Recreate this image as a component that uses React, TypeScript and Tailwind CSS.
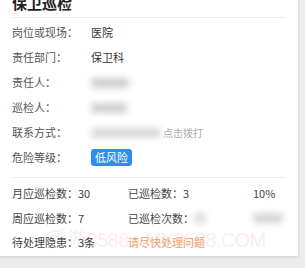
import React from "react";

const font = { fontFamily: '"Noto Sans CJK SC", "Liberation Sans", sans-serif' };

function Blob({ w, h = 10, c = "bg-[#cfcfcf]" }: { w: string; h?: number; c?: string }) {
  return <div className={`${w} ${c} rounded-sm blur-[3px]`} style={{ height: h }} />;
}

function Row({ label, children }: { label: string; children: React.ReactNode }) {
  return (
    <div className="flex h-[25px] items-center">
      <div className="w-[79px] text-[11px] text-[#555]">{label}</div>
      <div className="flex items-center text-[11px] text-[#333]">{children}</div>
    </div>
  );
}

export default function App() {
  return (
    <div className="h-[268px] w-[305px] overflow-hidden bg-[#ececec]" style={font}>
      <div className="relative h-[261px] w-[298px] bg-white shadow-[0_1px_3px_rgba(0,0,0,0.12)]">
        <div
          className="pointer-events-none absolute left-[48px] top-[234px] text-[20px] leading-[22px] tracking-[-0.6px] text-[#fdebf6]"
          style={{ fontFamily: '"Liberation Sans", "Noto Sans CJK SC", sans-serif' }}
        >
          手游3588 · MX3588.COM
        </div>
        <div className="relative px-3">
          <div className="mt-[-5px] text-[15px] font-bold leading-[15px] text-[#222]">保卫巡检</div>
          <div className="mt-[7px] h-px bg-[#eeeeee]" />
          <div className="pt-[2px]">
            <Row label="岗位或现场：">医院</Row>
            <Row label="责任部门：">保卫科</Row>
            <Row label="责任人：">
              <Blob w="w-[38px]" />
            </Row>
            <Row label="巡检人：">
              <Blob w="w-[36px]" />
            </Row>
            <Row label="联系方式：">
              <Blob w="w-[70px]" c="bg-[#dadada]" />
              <span className="ml-[2px] text-[10px] text-[#aaa]">点击拨打</span>
            </Row>
            <Row label="危险等级：">
              <span className="flex h-[17px] w-[41px] items-center justify-center rounded-[3px] bg-[#2d8ef0] text-[11px] text-white">
                低风险
              </span>
            </Row>
          </div>
          <div className="mt-[7px] h-px bg-[#eeeeee]" />
          <div className="pt-[3px] text-[11px] text-[#444]">
            <div className="flex h-[24.5px] items-center">
              <div className="w-[116px]">月应巡检数：30</div>
              <div className="w-[125px]">已巡检数：3</div>
              <div>10%</div>
            </div>
            <div className="flex h-[24.5px] items-center">
              <div className="w-[116px]">周应巡检数：7</div>
              <div className="flex w-[125px] items-center">
                已巡检次数：
                <Blob w="w-[12px]" h={12} c="bg-[#e0e0e0]" />
              </div>
              <Blob w="w-[30px]" h={10} c="bg-[#d6d6d6]" />
            </div>
            <div className="flex h-[24.5px] items-center">
              <div className="w-[116px]">待处理隐患：3条</div>
              <div className="text-[#f5a05c]">请尽快处理问题</div>
            </div>
          </div>
        </div>
      </div>
    </div>
  );
}
